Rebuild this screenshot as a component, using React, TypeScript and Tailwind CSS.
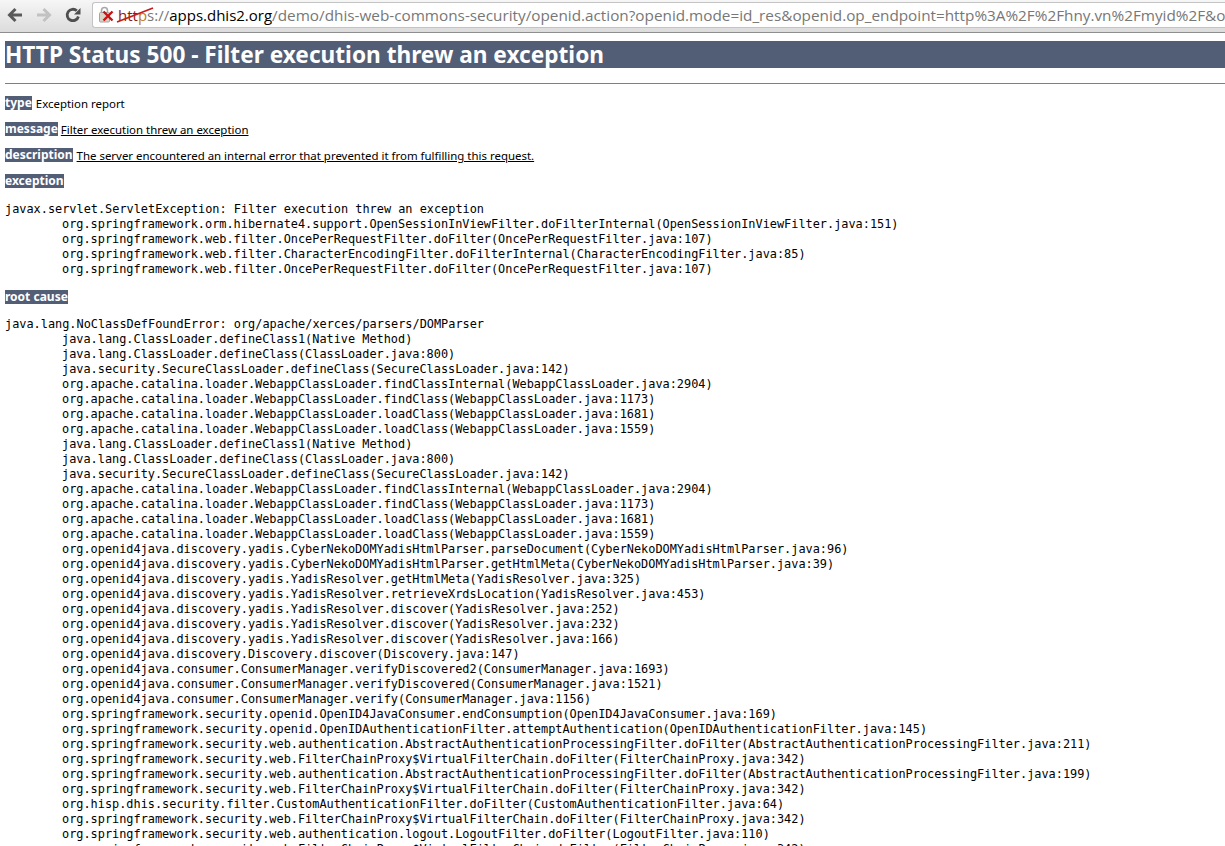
import React from "react";

const exceptionTrace = [
  "org.springframework.orm.hibernate4.support.OpenSessionInViewFilter.doFilterInternal(OpenSessionInViewFilter.java:151)",
  "org.springframework.web.filter.OncePerRequestFilter.doFilter(OncePerRequestFilter.java:107)",
  "org.springframework.web.filter.CharacterEncodingFilter.doFilterInternal(CharacterEncodingFilter.java:85)",
  "org.springframework.web.filter.OncePerRequestFilter.doFilter(OncePerRequestFilter.java:107)",
];

const rootTrace = [
  "java.lang.ClassLoader.defineClass1(Native Method)",
  "java.lang.ClassLoader.defineClass(ClassLoader.java:800)",
  "java.security.SecureClassLoader.defineClass(SecureClassLoader.java:142)",
  "org.apache.catalina.loader.WebappClassLoader.findClassInternal(WebappClassLoader.java:2904)",
  "org.apache.catalina.loader.WebappClassLoader.findClass(WebappClassLoader.java:1173)",
  "org.apache.catalina.loader.WebappClassLoader.loadClass(WebappClassLoader.java:1681)",
  "org.apache.catalina.loader.WebappClassLoader.loadClass(WebappClassLoader.java:1559)",
  "java.lang.ClassLoader.defineClass1(Native Method)",
  "java.lang.ClassLoader.defineClass(ClassLoader.java:800)",
  "java.security.SecureClassLoader.defineClass(SecureClassLoader.java:142)",
  "org.apache.catalina.loader.WebappClassLoader.findClassInternal(WebappClassLoader.java:2904)",
  "org.apache.catalina.loader.WebappClassLoader.findClass(WebappClassLoader.java:1173)",
  "org.apache.catalina.loader.WebappClassLoader.loadClass(WebappClassLoader.java:1681)",
  "org.apache.catalina.loader.WebappClassLoader.loadClass(WebappClassLoader.java:1559)",
  "org.openid4java.discovery.yadis.CyberNekoDOMYadisHtmlParser.parseDocument(CyberNekoDOMYadisHtmlParser.java:96)",
  "org.openid4java.discovery.yadis.CyberNekoDOMYadisHtmlParser.getHtmlMeta(CyberNekoDOMYadisHtmlParser.java:39)",
  "org.openid4java.discovery.yadis.YadisResolver.getHtmlMeta(YadisResolver.java:325)",
  "org.openid4java.discovery.yadis.YadisResolver.retrieveXrdsLocation(YadisResolver.java:453)",
  "org.openid4java.discovery.yadis.YadisResolver.discover(YadisResolver.java:252)",
  "org.openid4java.discovery.yadis.YadisResolver.discover(YadisResolver.java:232)",
  "org.openid4java.discovery.yadis.YadisResolver.discover(YadisResolver.java:166)",
  "org.openid4java.discovery.Discovery.discover(Discovery.java:147)",
  "org.openid4java.consumer.ConsumerManager.verifyDiscovered2(ConsumerManager.java:1693)",
  "org.openid4java.consumer.ConsumerManager.verifyDiscovered(ConsumerManager.java:1521)",
  "org.openid4java.consumer.ConsumerManager.verify(ConsumerManager.java:1156)",
  "org.springframework.security.openid.OpenID4JavaConsumer.endConsumption(OpenID4JavaConsumer.java:169)",
  "org.springframework.security.openid.OpenIDAuthenticationFilter.attemptAuthentication(OpenIDAuthenticationFilter.java:145)",
  "org.springframework.security.web.authentication.AbstractAuthenticationProcessingFilter.doFilter(AbstractAuthenticationProcessingFilter.java:211)",
  "org.springframework.security.web.FilterChainProxy$VirtualFilterChain.doFilter(FilterChainProxy.java:342)",
  "org.springframework.security.web.authentication.AbstractAuthenticationProcessingFilter.doFilter(AbstractAuthenticationProcessingFilter.java:199)",
  "org.springframework.security.web.FilterChainProxy$VirtualFilterChain.doFilter(FilterChainProxy.java:342)",
  "org.hisp.dhis.security.filter.CustomAuthenticationFilter.doFilter(CustomAuthenticationFilter.java:64)",
  "org.springframework.security.web.FilterChainProxy$VirtualFilterChain.doFilter(FilterChainProxy.java:342)",
  "org.springframework.security.web.authentication.logout.LogoutFilter.doFilter(LogoutFilter.java:110)",
  "org.springframework.security.web.FilterChainProxy$VirtualFilterChain.doFilter(FilterChainProxy.java:342)",
];

function Label({ children }: { children: React.ReactNode }) {
  return <b className="inline-block h-[14px] bg-[#525d76] align-top text-[12px] leading-[14px] font-bold text-white">{children}</b>;
}

function Trace({ head, lines }: { head: string; lines: string[] }) {
  return (
    <div className="font-['DejaVu_Sans_Mono',monospace] text-[11.88px] leading-[15px] whitespace-pre text-black">
      <div>{head}</div>
      {lines.map((line, i) => (
        <div key={i} className="pl-[57px]">
          {line}
        </div>
      ))}
    </div>
  );
}

function Toolbar() {
  return (
    <div className="flex h-[33px] border-b border-[#8e8e8e] bg-gradient-to-b from-[#f6f6f6] to-[#dcdcdc]">
      <div className="flex w-[92px] shrink-0 items-start gap-[13px] pt-[7px] pl-[7px]">
        <svg width="16" height="16" viewBox="0 0 16 16" fill="none" stroke="#5a5a5a" strokeWidth="3">
          <path d="M15 8H3M8.5 2 2.5 8l6 6" />
        </svg>
        <svg width="16" height="16" viewBox="0 0 16 16" fill="none" stroke="#c2c2c2" strokeWidth="3">
          <path d="M1 8h12M7.5 2l6 6-6 6" />
        </svg>
        <svg width="16" height="16" viewBox="0 0 16 16" fill="none">
          <path d="M13.4 9.5A5.7 5.7 0 1 1 11.8 3.8" stroke="#4f4f4f" strokeWidth="2.8" />
          <path d="M9 7.5h6.5V1z" fill="#4f4f4f" />
        </svg>
      </div>
      <div className="mt-[2px] flex h-[26px] flex-1 items-center overflow-hidden rounded-l-[3px] border border-r-0 border-[#c4c4c4] bg-white pl-[5px] font-['Open_Sans',sans-serif] text-[15px] whitespace-nowrap">
        <svg width="16" height="20" viewBox="0 0 16 20" fill="none" className="shrink-0">
          <path d="M3.5 7.5V5.5a3 3 0 0 1 6 0v2" stroke="#a8a8a8" strokeWidth="1.6" />
          <rect x="1.5" y="7.5" width="10" height="9.5" rx="1" fill="#d9d4c8" stroke="#a5a5a5" />
          <path d="M5.5 6.5l9 9M14.5 6.5l-9 9" stroke="#cc1111" strokeWidth="2.4" />
        </svg>
        <span className="relative ml-[4px] text-[#777]">
          <span className="text-[#8c1a1a]">htt</span>
          <span className="text-[#c07a1a]">p</span>
          <span>s</span>
          <svg width="38" height="16" viewBox="0 0 38 16" fill="none" className="absolute top-[3px] -left-[2px]">
            <path d="M1 15 37 1" stroke="#c81a1a" strokeWidth="1.8" />
          </svg>
        </span>
        <span className="text-[#777]">://</span>
        <span className="text-black">apps.dhis2.org</span>
        <span className="text-[15.3px] text-[#777]">/demo/dhis-web-commons-security/openid.action?openid.mode=id_res&amp;openid.op_endpoint=http%3A%2F%2Fhny.vn%2Fmyid%2F&amp;openid.claimed_id</span>
      </div>
    </div>
  );
}

export default function App() {
  return (
    <div className="h-[846px] w-[1225px] overflow-hidden bg-white font-['Noto_Sans',sans-serif] text-[11.45px] text-black">
      <Toolbar />
      <div className="pl-[5px]">
        <h1 className="mt-[8px] h-[27px] bg-[#525d76] text-[22.65px] leading-[27px] font-bold text-white">
          HTTP Status 500 - Filter execution threw an exception
        </h1>
        <div className="mt-[15px] h-px bg-[#808080]" />
        <p className="mt-[12px] h-[14px] leading-[14px]">
          <Label>type</Label> <span className="ml-px align-[-1px]">Exception report</span>
        </p>
        <p className="mt-[12px] h-[14px] leading-[14px]">
          <Label>message</Label> <u className="align-[-1px]">Filter execution threw an exception</u>
        </p>
        <p className="mt-[12px] h-[14px] leading-[14px]">
          <Label>description</Label> <u className="ml-px align-[-1px]">The server encountered an internal error that prevented it from fulfilling this request.</u>
        </p>
        <p className="mt-[12px] h-[14px] leading-[14px]">
          <Label>exception</Label>
        </p>
        <div className="mt-[14px]">
          <Trace head="javax.servlet.ServletException: Filter execution threw an exception" lines={exceptionTrace} />
        </div>
        <p className="mt-[13px] h-[14px] leading-[14px]">
          <Label>root cause</Label>
        </p>
        <div className="mt-[13px]">
          <Trace head="java.lang.NoClassDefFoundError: org/apache/xerces/parsers/DOMParser" lines={rootTrace} />
        </div>
      </div>
    </div>
  );
}
